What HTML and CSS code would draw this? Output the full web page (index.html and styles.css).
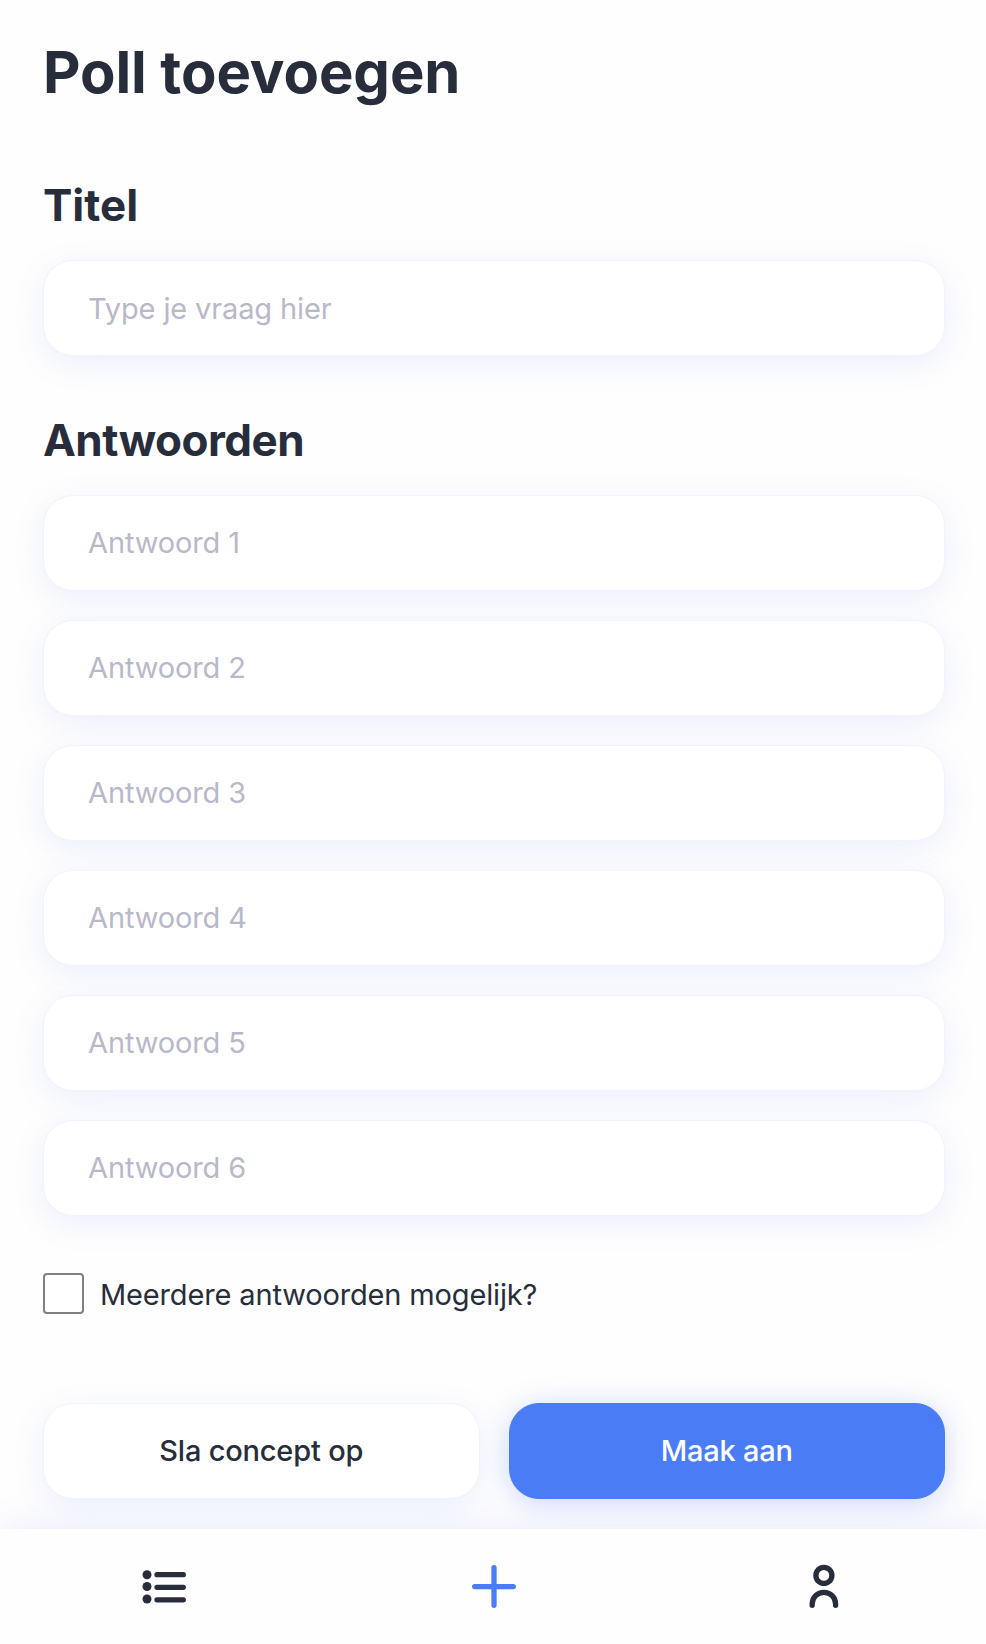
FILE: index.html
```html
<!DOCTYPE html>
<html lang="nl">
<head>
<meta charset="utf-8">
<title>Poll toevoegen</title>
<link rel="stylesheet" href="styles.css">
</head>
<body>
<div class="app">
  <main class="content">
    <h1 class="title">Poll toevoegen</h1>
    <h2 class="heading">Titel</h2>
    <input class="field field-title" type="text" placeholder="Type je vraag hier">
    <h2 class="heading heading-answers">Antwoorden</h2>
    <div class="answers">
      <input class="field" type="text" placeholder="Antwoord 1">
      <input class="field" type="text" placeholder="Antwoord 2">
      <input class="field" type="text" placeholder="Antwoord 3">
      <input class="field" type="text" placeholder="Antwoord 4">
      <input class="field" type="text" placeholder="Antwoord 5">
      <input class="field" type="text" placeholder="Antwoord 6">
    </div>
    <label class="option"><input class="check" type="checkbox"><span class="option-text">Meerdere antwoorden mogelijk?</span></label>
    <div class="actions">
      <button class="button" type="button">Sla concept op</button>
      <button class="button button-primary" type="button">Maak aan</button>
    </div>
  </main>
  <nav class="nav">
    <a class="nav-item"><svg class="icon" viewBox="0 0 48 48"><g fill="currentColor"><circle cx="7" cy="12.7" r="4.5"/><circle cx="7" cy="24.5" r="4.5"/><circle cx="7" cy="37" r="4.5"/></g><path d="M17 12.7H43.3M17 25.3H43.3M17 37.8H43.3"/></svg></a>
    <a class="nav-item nav-item-active"><svg class="icon" viewBox="0 0 48 48"><path d="M25 5.7V43.3M5.7 24.6H44.3"/></svg></a>
    <a class="nav-item"><svg class="icon" viewBox="0 0 48 48"><circle cx="25.9" cy="13.4" r="8"/><path d="M14.2 43.3V42a11.7 11.7 0 0 1 23.4 0V43.3"/></svg></a>
  </nav>
</div>
</body>
</html>
```
FILE: styles.css
```css
* {
  box-sizing: border-box;
}

body {
  margin: 0;
  background: #fefefe;
  color: #282d3c;
  font-family: Inter, "Liberation Sans", sans-serif;
}

.app {
  display: flex;
  flex-direction: column;
  height: 1644px;
  overflow: hidden;
}

.content {
  flex: 1;
  padding: 36px 41px 0 43px;
}

.title {
  margin: 0;
  font-size: 58px;
  line-height: 72px;
  font-weight: 700;
  letter-spacing: -0.1px;
}

.heading {
  margin: 70px 0 28px;
  font-size: 44px;
  line-height: 54px;
  font-weight: 700;
}

.heading-answers {
  margin-top: 57px;
  letter-spacing: -0.5px;
}

.field {
  display: block;
  width: 100%;
  height: 96px;
  padding: 0 44px 2px;
  border: 1px solid #f0f3ff;
  border-radius: 30px;
  background: #fff;
  box-shadow: 0 8px 32px rgba(74, 110, 245, 0.1);
  color: inherit;
  font: 400 29px/36px Inter, "Liberation Sans", sans-serif;
  letter-spacing: -0.13px;
}

.field-title {
  padding-bottom: 0;
}

.field::placeholder {
  color: #b9b8c9;
}

.answers {
  display: grid;
  gap: 29px;
}

.option {
  display: flex;
  align-items: center;
  gap: 16px;
  height: 41px;
  margin-top: 57px;
  font-size: 29px;
  letter-spacing: -0.15px;
}

.option-text {
  padding-top: 2px;
}

.check {
  appearance: none;
  width: 41px;
  height: 41px;
  margin: 0;
  border: 2px solid #808080;
  border-radius: 4px;
  background: #fff;
}

.actions {
  display: grid;
  grid-template-columns: 1fr 1fr;
  gap: 29px;
  margin-top: 89px;
}

.button {
  height: 96px;
  border: 1px solid #f0f3ff;
  border-radius: 30px;
  background: #fff;
  box-shadow: 0 8px 32px rgba(74, 110, 245, 0.1);
  color: inherit;
  font: 550 29px/36px Inter, "Liberation Sans", sans-serif;
  letter-spacing: -0.2px;
}

.button-primary {
  border-color: #4a7df5;
  background: #4a7df5;
  box-shadow: 0 4px 28px rgba(74, 110, 245, 0.28);
  color: #fff;
}

.nav {
  position: relative;
  display: grid;
  grid-template-columns: repeat(3, 1fr);
  height: 115px;
  padding-top: 33px;
  background: #fefefe;
  box-shadow: 0 -4px 32px rgba(74, 110, 245, 0.1);
}

.nav-item {
  display: flex;
  justify-content: center;
  align-items: flex-start;
}

.nav-item-active {
  color: #4a7df5;
}

.icon {
  width: 48px;
  height: 48px;
  fill: none;
  stroke: currentColor;
  stroke-width: 5.3;
  stroke-linecap: round;
}

.icon g {
  stroke: none;
}
```
